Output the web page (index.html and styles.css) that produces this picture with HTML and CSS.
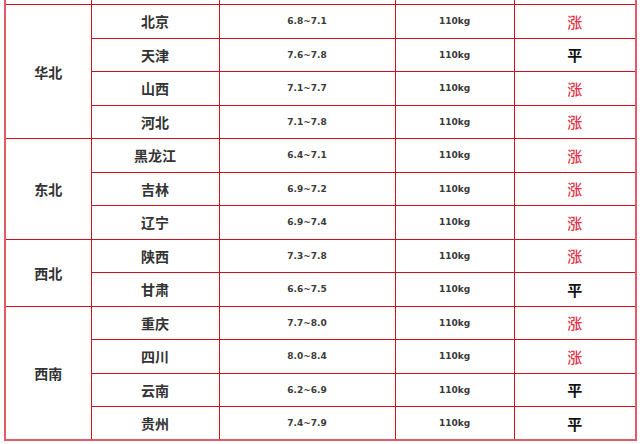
FILE: index.html
```html
<!DOCTYPE html>
<html>
<head>
<meta charset="utf-8">
<link rel="stylesheet" href="styles.css">
</head>
<body>
<div class="wrap">
<table class="price">
  <colgroup>
    <col class="c1"><col class="c2"><col class="c3"><col class="c4"><col class="c5">
  </colgroup>
  <tr class="cut"><td></td><td></td><td></td><td></td><td></td></tr>
  <tr><td class="region" rowspan="4">华北</td><td class="city">北京</td><td class="num">6.8~7.1</td><td class="num">110kg</td><td class="up">涨</td></tr>
  <tr><td class="city">天津</td><td class="num">7.6~7.8</td><td class="num">110kg</td><td class="flat">平</td></tr>
  <tr><td class="city">山西</td><td class="num">7.1~7.7</td><td class="num">110kg</td><td class="up">涨</td></tr>
  <tr><td class="city">河北</td><td class="num">7.1~7.8</td><td class="num">110kg</td><td class="up">涨</td></tr>
  <tr><td class="region" rowspan="3">东北</td><td class="city">黑龙江</td><td class="num">6.4~7.1</td><td class="num">110kg</td><td class="up">涨</td></tr>
  <tr><td class="city">吉林</td><td class="num">6.9~7.2</td><td class="num">110kg</td><td class="up">涨</td></tr>
  <tr><td class="city">辽宁</td><td class="num">6.9~7.4</td><td class="num">110kg</td><td class="up">涨</td></tr>
  <tr><td class="region" rowspan="2">西北</td><td class="city">陕西</td><td class="num">7.3~7.8</td><td class="num">110kg</td><td class="up">涨</td></tr>
  <tr><td class="city">甘肃</td><td class="num">6.6~7.5</td><td class="num">110kg</td><td class="flat">平</td></tr>
  <tr><td class="region" rowspan="4">西南</td><td class="city">重庆</td><td class="num">7.7~8.0</td><td class="num">110kg</td><td class="up">涨</td></tr>
  <tr><td class="city">四川</td><td class="num">8.0~8.4</td><td class="num">110kg</td><td class="up">涨</td></tr>
  <tr><td class="city">云南</td><td class="num">6.2~6.9</td><td class="num">110kg</td><td class="flat">平</td></tr>
  <tr><td class="city">贵州</td><td class="num">7.4~7.9</td><td class="num">110kg</td><td class="flat">平</td></tr>
</table>
</div>
</body>
</html>
```
FILE: styles.css
```css
html, body {
  margin: 0;
  padding: 0;
  background: #ffffff;
}
.wrap {
  width: 640px;
  height: 444px;
  overflow: hidden;
  padding-left: 4px;
  box-sizing: border-box;
}
.price {
  border-collapse: collapse;
  table-layout: fixed;
  width: 631px;
  margin-top: -30px;
  border: 2px solid #e25a68;
}
.c1 { width: 86px; }
.c2 { width: 128px; }
.c3 { width: 176px; }
.c4 { width: 119px; }
.c5 { width: 122px; }
.price tr {
  height: 33.5px;
}
.price td {
  border: 1px solid #cc1122;
  padding: 0;
  text-align: center;
  vertical-align: middle;
  color: #333333;
}
.price .region, .price .city {
  font-family: "Noto Sans CJK SC", sans-serif;
  font-weight: 700;
  font-size: 14px;
  color: #333333;
}
.price .num {
  font-family: "DejaVu Sans", sans-serif;
  font-weight: 700;
  font-size: 9px;
  color: #3a3a3a;
}
.price .up {
  font-family: "Noto Sans CJK SC", sans-serif;
  font-weight: 500;
  font-size: 15px;
  color: #e0364a;
}
.price .flat {
  font-family: "Noto Sans CJK SC", sans-serif;
  font-weight: 700;
  font-size: 15px;
  color: #111111;
}
```
